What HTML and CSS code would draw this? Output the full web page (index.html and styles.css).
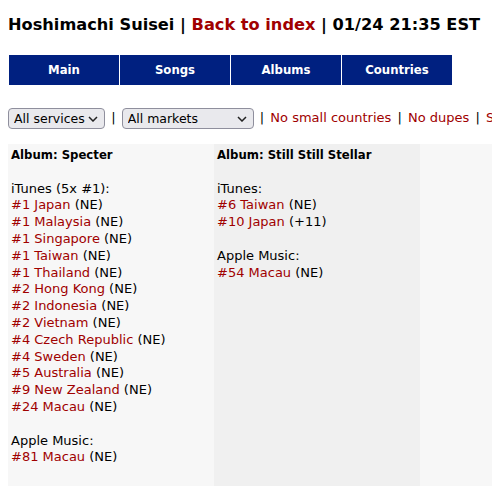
FILE: index.html
```html
<!DOCTYPE html>
<html lang="en">
<head>
    <meta charset="UTF-8">
    <title>Hoshimachi Suisei</title>
    <link rel="stylesheet" href="styles.css">
</head>
<body>
    <h1 class="title">Hoshimachi Suisei | <a href="index.html">Back to index</a> | 01/24 21:35 EST</h1>

    <nav class="tabs">
        <a href="#" class="tab">Main</a>
        <a href="#" class="tab">Songs</a>
        <a href="#" class="tab">Albums</a>
        <a href="#" class="tab">Countries</a>
    </nav>

    <div class="filters">
        <select class="svc">
            <option>All services</option>
            <option>iTunes</option>
            <option>Apple Music</option>
        </select>
        <span class="sep">|</span>
        <select class="mkt">
            <option>All markets</option>
        </select>
        <span class="sep">|</span> <a href="#">No small countries</a>
        <span class="sep">|</span> <a href="#">No dupes</a>
        <span class="sep">|</span> <a href="#">Show all</a>
    </div>

    <table class="albums">
        <tr>
            <td>
                <b>Album: Specter</b><br><br>
                iTunes (5x #1):<br>
                <a href="#">#1 Japan</a> (NE)<br>
                <a href="#">#1 Malaysia</a> (NE)<br>
                <a href="#">#1 Singapore</a> (NE)<br>
                <a href="#">#1 Taiwan</a> (NE)<br>
                <a href="#">#1 Thailand</a> (NE)<br>
                <a href="#">#2 Hong Kong</a> (NE)<br>
                <a href="#">#2 Indonesia</a> (NE)<br>
                <a href="#">#2 Vietnam</a> (NE)<br>
                <a href="#">#4 Czech Republic</a> (NE)<br>
                <a href="#">#4 Sweden</a> (NE)<br>
                <a href="#">#5 Australia</a> (NE)<br>
                <a href="#">#9 New Zealand</a> (NE)<br>
                <a href="#">#24 Macau</a> (NE)<br><br>
                Apple Music:<br>
                <a href="#">#81 Macau</a> (NE)<br><br>
            </td>
            <td>
                <b>Album: Still Still Stellar</b><br><br>
                iTunes:<br>
                <a href="#">#6 Taiwan</a> (NE)<br>
                <a href="#">#10 Japan</a> (+11)<br><br>
                Apple Music:<br>
                <a href="#">#54 Macau</a> (NE)<br>
            </td>
            <td></td>
        </tr>
    </table>
</body>
</html>
```

FILE: styles.css
```css
body {
    margin: 8px;
    font-family: "DejaVu Sans", Verdana, sans-serif;
    font-size: 13px;
    color: #000;
}
a {
    color: #a00000;
    text-decoration: none;
}

/* Header */
.title {
    font-size: 16.2px;
    font-weight: bold;
    margin: 7px 0 20px 0;
    white-space: nowrap;
}

/* Tabs */
.tabs {
    display: flex;
    gap: 1px;
    padding: 1px;
    width: max-content;
}
.tab {
    width: 110px;
    height: 30px;
    display: flex;
    align-items: center;
    justify-content: center;
    background-color: #002080;
    color: white;
    font-size: 11.7px;
    font-weight: bold;
}

/* Filter line */
.filters {
    margin: 20px 0 14px 0;
    white-space: nowrap;
    line-height: 24px;
}
.sep {
    margin: 0 2px;
}
.filters select {
    appearance: none;
    font-family: "DejaVu Sans", Verdana, sans-serif;
    font-size: 12.5px;
    color: #000;
    height: 21px;
    padding: 0 16px 0 5px;
    border: 1px solid #8f8f9d;
    border-radius: 4px;
    background-color: #e9e9ed;
    background-image: url("data:image/svg+xml,%3Csvg xmlns='http://www.w3.org/2000/svg' width='10' height='6'%3E%3Cpath d='M1 1l4 4 4-4' fill='none' stroke='%23222' stroke-width='1.5'/%3E%3C/svg%3E");
    background-repeat: no-repeat;
    background-position: right 6px center;
    vertical-align: middle;
}
.svc {
    width: 97px;
}
.mkt {
    width: 132px;
}

/* Album table */
.albums {
    border-collapse: collapse;
    line-height: 16.8px;
}
.albums td {
    width: 200px;
    min-width: 200px;
    padding: 3px;
    vertical-align: top;
    background-color: #f7f7f7;
}
.albums td b {
    font-size: 11.7px;
}
.albums td:nth-child(even) {
    background-color: #f0f0f0;
}
```
